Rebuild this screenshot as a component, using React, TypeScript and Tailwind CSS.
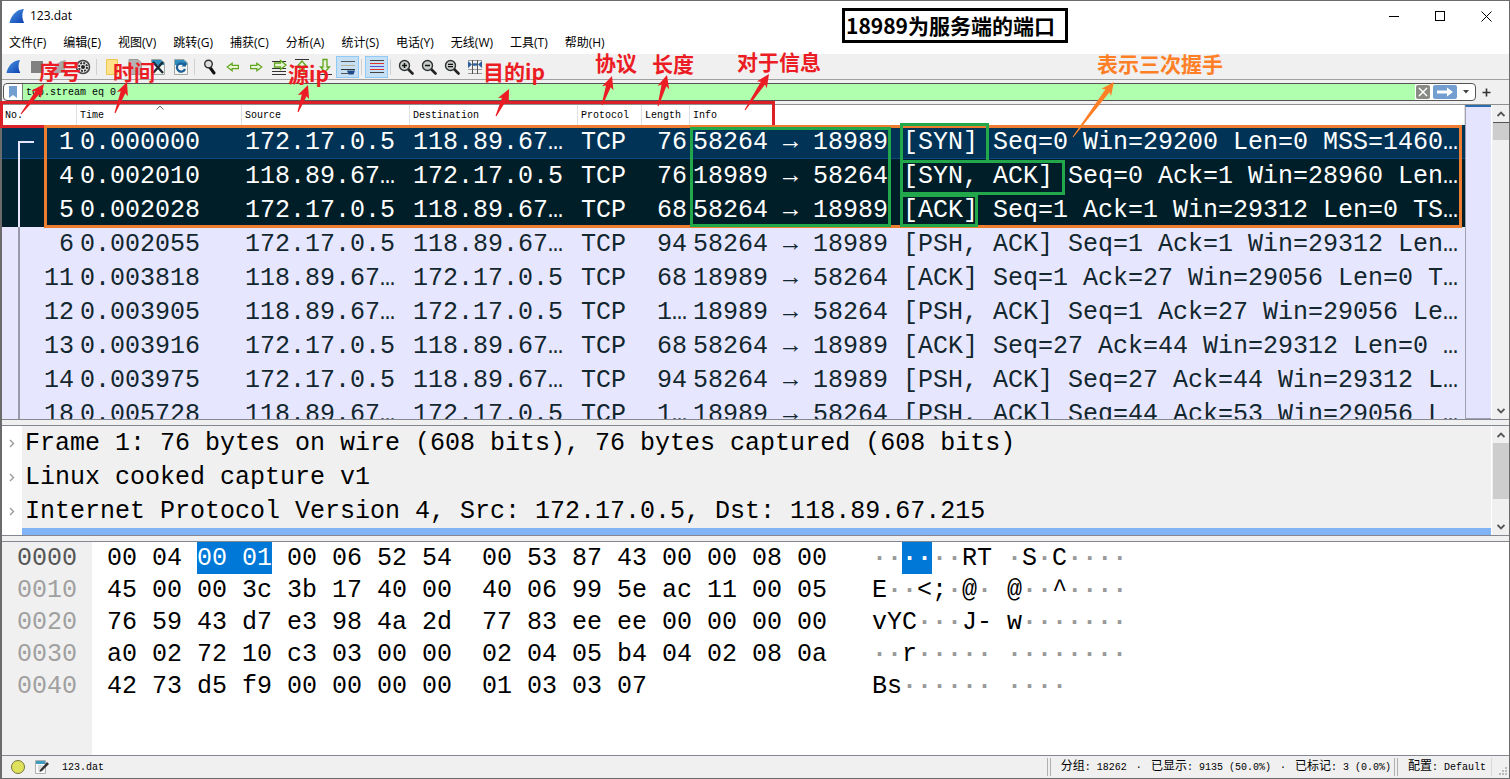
import type { ReactNode } from "react";
import clsx from "clsx";

type Packet = {
  no: number;
  time: string;
  source: string;
  destination: string;
  length: string;
  info: string;
};

const A = "172.17.0.5";
const B = "118.89.67…";

const packets: Packet[] = [
  { no: 1, time: "0.000000", source: A, destination: B, length: "76", info: "58264 → 18989 [SYN] Seq=0 Win=29200 Len=0 MSS=1460…" },
  { no: 4, time: "0.002010", source: B, destination: A, length: "76", info: "18989 → 58264 [SYN, ACK] Seq=0 Ack=1 Win=28960 Len…" },
  { no: 5, time: "0.002028", source: A, destination: B, length: "68", info: "58264 → 18989 [ACK] Seq=1 Ack=1 Win=29312 Len=0 TS…" },
  { no: 6, time: "0.002055", source: A, destination: B, length: "94", info: "58264 → 18989 [PSH, ACK] Seq=1 Ack=1 Win=29312 Len…" },
  { no: 11, time: "0.003818", source: B, destination: A, length: "68", info: "18989 → 58264 [ACK] Seq=1 Ack=27 Win=29056 Len=0 T…" },
  { no: 12, time: "0.003905", source: B, destination: A, length: "1…", info: "18989 → 58264 [PSH, ACK] Seq=1 Ack=27 Win=29056 Le…" },
  { no: 13, time: "0.003916", source: A, destination: B, length: "68", info: "58264 → 18989 [ACK] Seq=27 Ack=44 Win=29312 Len=0 …" },
  { no: 14, time: "0.003975", source: A, destination: B, length: "94", info: "58264 → 18989 [PSH, ACK] Seq=27 Ack=44 Win=29312 L…" },
  { no: 18, time: "0.005728", source: B, destination: A, length: "1…", info: "18989 → 58264 [PSH, ACK] Seq=44 Ack=53 Win=29056 L…" },
];

const columns = ["No.", "Time", "Source", "Destination", "Protocol", "Length", "Info"];

const menus = [
  "文件(F)",
  "编辑(E)",
  "视图(V)",
  "跳转(G)",
  "捕获(C)",
  "分析(A)",
  "统计(S)",
  "电话(Y)",
  "无线(W)",
  "工具(T)",
  "帮助(H)",
];

const details = [
  "Frame 1: 76 bytes on wire (608 bits), 76 bytes captured (608 bits)",
  "Linux cooked capture v1",
  "Internet Protocol Version 4, Src: 172.17.0.5, Dst: 118.89.67.215",
];

const hexRows = [
  { offset: "0010", bytes: "45 00 00 3c 3b 17 40 00  40 06 99 5e ac 11 00 05", ascii: "E··<;·@· @··^····" },
  { offset: "0020", bytes: "76 59 43 d7 e3 98 4a 2d  77 83 ee ee 00 00 00 00", ascii: "vYC···J- w·······" },
  { offset: "0030", bytes: "a0 02 72 10 c3 03 00 00  02 04 05 b4 04 02 08 0a", ascii: "··r····· ········" },
  { offset: "0040", bytes: "42 73 d5 f9 00 00 00 00  01 03 03 07", ascii: "Bs······ ····" },
];

const mono = "font-['Liberation_Mono','Noto_Sans_CJK_SC',monospace]";
const smallMono = "font-['Liberation_Mono','Noto_Sans_CJK_SC',monospace] text-[10px]";

function Fin({ size }: { size: number }) {
  return (
    <svg width={size} height={size} viewBox="0 0 16 16">
      <defs>
        <linearGradient id="fin" x1="0" y1="0" x2="1" y2="1">
          <stop offset="0" stopColor="#4c9be8" />
          <stop offset="1" stopColor="#0c3fae" />
        </linearGradient>
      </defs>
      <path d="M0.500 15C2 7.500 7 1.500 15 1C12.800 5 12.800 10.500 15.200 15Z" fill="url(#fin)" />
    </svg>
  );
}

function Sheet({ children }: { children?: ReactNode }) {
  return (
    <svg width="16" height="18" viewBox="0 0 16 18">
      <path d="M1.500 1.500H11L14.500 5V16.500H1.500Z" fill="#f4f6f4" stroke="#a0a8a0" />
      <path d="M2 2H11L14 5V7H2Z" fill="#2f8fc0" />
      {children}
    </svg>
  );
}

function Lens({ children }: { children?: ReactNode }) {
  return (
    <svg width="16" height="16" viewBox="0 0 16 16">
      <path d="M10 10L14.500 14.500" stroke="#222" strokeWidth="2.600" strokeLinecap="round" />
      <circle cx="6.500" cy="6.500" r="5" fill="#c9cdc9" stroke="#2e3436" strokeWidth="1.400" />
      {children}
    </svg>
  );
}

function GreenArrow({ flip }: { flip?: boolean }) {
  return (
    <svg width="14" height="10" viewBox="0 0 16 12">
      <path
        d={flip ? "M15 6L9 1.500V4H1.500V8H9V10.500Z" : "M1 6L7 1.500V4H14.500V8H7V10.500Z"}
        fill="#e8f5d8"
        stroke="#5fa51e"
        strokeWidth="1.400"
      />
    </svg>
  );
}

function Tool({ label, active, children }: { label: string; active?: boolean; children: ReactNode }) {
  return (
    <button
      type="button"
      aria-label={label}
      className={clsx(
        "flex h-[22px] w-[23px] shrink-0 items-center justify-center",
        active && "border border-[#90c8f6] bg-[#c5e0f5]",
      )}
    >
      {children}
    </button>
  );
}

function Divider() {
  return <span className="mx-[2px] h-4 w-[2px] border-l border-[#d0d0d0]" />;
}

function Toolbar() {
  return (
    <div className="flex h-[26px] shrink-0 items-center border-b border-[#a0a0a0] bg-[#f0f0f0]">
      <Tool label="Start capture"><Fin size={15} /></Tool>
      <Tool label="Stop capture">
        <svg width="14" height="14"><rect x="1" y="1" width="12" height="12" fill="#808080" /></svg>
      </Tool>
      <Tool label="Restart capture">
        <svg width="15" height="15" viewBox="0 0 16 16">
          <path d="M0.500 15C2 7.500 7 1.500 15 1C12.800 5 12.800 10.500 15.200 15Z" fill="#a8a8a8" />
        </svg>
      </Tool>
      <Tool label="Capture options">
        <svg width="16" height="16" viewBox="0 0 16 16">
          <circle cx="8" cy="8" r="6.500" fill="#eee" stroke="#444" strokeWidth="1.600" />
          <circle cx="8" cy="8" r="4" fill="none" stroke="#333" strokeWidth="2" strokeDasharray="2 1.100" />
          <circle cx="8" cy="8" r="2" fill="#222" />
        </svg>
      </Tool>
      <Divider />
      <Tool label="Open file">
        <svg width="16" height="18" viewBox="0 0 16 18">
          <path d="M2.500 1.500H13.500V16.500H2.500Z" fill="#ffe28a" stroke="#eac84f" />
        </svg>
      </Tool>
      <Tool label="Save file">
        <svg width="16" height="18" viewBox="0 0 16 18">
          <path d="M2 1.500H11L14.500 5V16.500H2Z" fill="#b4b4b4" stroke="#999" />
        </svg>
      </Tool>
      <Tool label="Close file">
        <Sheet>
          <path d="M3 4L13 15M13 4L3 15" stroke="#1d2b36" strokeWidth="2.400" />
        </Sheet>
      </Tool>
      <Tool label="Reload file">
        <Sheet>
          <path d="M11.500 7A4.200 4.200 0 1 0 12 11" fill="none" stroke="#1f5f95" strokeWidth="2.200" />
          <path d="M13 3.500V8.500H8.500Z" fill="#1f5f95" />
        </Sheet>
      </Tool>
      <Divider />
      <Tool label="Find packet">
        <svg width="14" height="16" viewBox="0 0 14 16">
          <path d="M7 8.500L11 14" stroke="#111" strokeWidth="3" strokeLinecap="round" />
          <circle cx="5.500" cy="5" r="3.800" fill="#ddd" stroke="#333" strokeWidth="1.400" />
        </svg>
      </Tool>
      <Tool label="Previous packet"><GreenArrow /></Tool>
      <Tool label="Next packet"><GreenArrow flip /></Tool>
      <Tool label="Go to packet">
        <svg width="16" height="16" viewBox="0 0 16 16">
          <path d="M1 2.500H15M1 9.500H15M1 12.500H15M1 15.500H15" stroke="#333" />
          <path d="M15 6L9.500 1.500V4H3.500V8H9.500V10.500Z" fill="#e8f5d8" stroke="#5fa51e" strokeWidth="1.300" />
        </svg>
      </Tool>
      <Tool label="First packet">
        <svg width="16" height="18" viewBox="0 0 16 18">
          <path d="M1 1.500H15" stroke="#333" />
          <path d="M8 3L3.500 8H6V16H10V8H12.500Z" fill="#e8f5d8" stroke="#5fa51e" strokeWidth="1.300" />
        </svg>
      </Tool>
      <Tool label="Last packet">
        <svg width="16" height="18" viewBox="0 0 16 18">
          <path d="M1 16.500H15" stroke="#333" />
          <path d="M8 14L3.500 9H6V1.500H10V9H12.500Z" fill="#e8f5d8" stroke="#5fa51e" strokeWidth="1.300" />
        </svg>
      </Tool>
      <Tool label="Auto scroll" active>
        <svg width="16" height="18" viewBox="0 0 16 18">
          <path d="M1 3.500H15M1 15.500H8" stroke="#555" />
          <path d="M1 7.500H15" stroke="#b8b090" />
          <path d="M1 11.500H15" stroke="#333" />
          <path d="M7 12.500H15L13.500 16.500H8.500Z" fill="#204a87" />
        </svg>
      </Tool>
      <Divider />
      <Tool label="Colorize" active>
        <svg width="16" height="16" viewBox="0 0 16 16">
          <path d="M1 1.500H15M1 13.500H15" stroke="#444" />
          <path d="M1 4.500H15" stroke="#e03030" />
          <path d="M1 7.500H15" stroke="#5a4fcf" />
          <path d="M1 10.500H15" stroke="#e03030" />
        </svg>
      </Tool>
      <Divider />
      <Tool label="Zoom in">
        <Lens><path d="M4 6.500H9M6.500 4V9" stroke="#111" strokeWidth="1.500" /></Lens>
      </Tool>
      <Tool label="Zoom out">
        <Lens><path d="M4 6.500H9" stroke="#111" strokeWidth="1.500" /></Lens>
      </Tool>
      <Tool label="Normal size">
        <Lens><path d="M4 5.300H9M4 7.700H9" stroke="#111" strokeWidth="1.300" /></Lens>
      </Tool>
      <Tool label="Resize columns">
        <svg width="16" height="16" viewBox="0 0 16 16">
          <path d="M1 1.500H15M1 10.500H15M1 14.500H15" stroke="#999" />
          <path d="M5.500 1V15M10.500 1V15" stroke="#555" />
          <path d="M1 2L5 5.500L1 9ZM15 2L11 5.500L15 9Z" fill="#2c5d9e" />
          <path d="M6 5.500H10" stroke="#2c5d9e" strokeWidth="2.400" />
        </svg>
      </Tool>
    </div>
  );
}

function FilterBar() {
  return (
    <div className="flex h-[25px] shrink-0 items-center border-b border-[#909090] bg-[#f0f0f0] pr-[18px] pl-px">
      <div className="flex h-[18px] flex-1 items-center overflow-hidden rounded-sm border border-[#555] bg-white">
        <button type="button" aria-label="Bookmark" className="flex w-[18px] justify-center">
          <svg width="8" height="12"><path d="M0 0H8V12L4 9L0 12Z" fill="#729fcf" /></svg>
        </button>
        <input
          aria-label="Display filter"
          defaultValue="tcp.stream eq 0"
          className={`h-4 min-w-0 flex-1 border-l border-[#777] bg-[#afffaf] px-[3px] text-black outline-none ${smallMono}`}
        />
        <button type="button" aria-label="Clear filter" className="ml-px h-[14px] w-[14px] rounded-[2px] bg-[#888a85]">
          <svg width="14" height="14"><path d="M3 3L11 11M11 3L3 11" stroke="#fff" strokeWidth="1.500" /></svg>
        </button>
        <button type="button" aria-label="Apply filter" className="ml-[3px] h-[14px] w-6 rounded-[2px] bg-[#729fcf]">
          <svg width="24" height="14"><path d="M4 5.500H14V2.500L20 7L14 11.500V8.500H4Z" fill="#fff" /></svg>
        </button>
        <button type="button" aria-label="Recent filters" className="flex w-[18px] justify-center">
          <svg width="6" height="4"><path d="M0 0H6L3 3.500Z" fill="#444" /></svg>
        </button>
      </div>
      <button type="button" aria-label="Add filter button" className="ml-1.5">
        <svg width="9" height="9"><path d="M0.500 4.500H8.500M4.500 0.500V8.500" stroke="#333" strokeWidth="1.600" /></svg>
      </button>
    </div>
  );
}

function ScrollBar({ thumb }: { thumb: ReactNode }) {
  return (
    <div className="flex w-[18px] shrink-0 flex-col items-center border-l border-white bg-[#f0f0f0]">
      <svg width="8" height="17" viewBox="0 0 8 17">
        <path d="M0.500 11L4 7.500L7.500 11" fill="none" stroke="#555" strokeWidth="1.800" />
      </svg>
      {thumb}
      <svg width="8" height="17" viewBox="0 0 8 17" className="mt-auto">
        <path d="M0.500 7L4 10.500L7.500 7" fill="none" stroke="#555" strokeWidth="1.800" />
      </svg>
    </div>
  );
}

function PacketList() {
  return (
    <div className="flex h-[315px] shrink-0 overflow-hidden border-b border-[#828790]">
      <div className="min-w-0 flex-1 overflow-hidden bg-[#e7e6ff]">
        <table className="w-full table-fixed border-collapse">
          <colgroup>
            <col className="w-[75px]" />
            <col className="w-[165px]" />
            <col className="w-[168px]" />
            <col className="w-[168px]" />
            <col className="w-[64px]" />
            <col className="w-[48px]" />
            <col />
          </colgroup>
          <thead>
            <tr className="h-5 bg-white">
              {columns.map((name) => (
                <th
                  key={name}
                  scope="col"
                  className={`relative p-0 pl-[3px] text-left font-normal whitespace-nowrap text-black shadow-[inset_-1px_0_0_#e0e0e0] ${smallMono}`}
                >
                  {name}
                  {name === "Time" ? (
                    <svg width="8" height="5" className="absolute top-0 left-1/2 -translate-x-1/2">
                      <path d="M0.500 4.500L4 1L7.500 4.500" fill="none" stroke="#666" />
                    </svg>
                  ) : null}
                </th>
              ))}
            </tr>
          </thead>
          <tbody className={`text-[25px] leading-8 whitespace-pre ${mono}`}>
            {packets.map((packet, i) => (
              <tr
                key={packet.no}
                className={clsx(
                  "h-[34px]",
                  i === 0 && "bg-[#003356] text-white shadow-[inset_0_-1px_0_#0b4a80]",
                  (i === 1 || i === 2) && "bg-[#001e28] text-white",
                  i > 2 && "text-[#12272e]",
                )}
              >
                <td className="p-0 pr-[3px]">
                  <div className="flex h-[34px] items-end justify-between pl-4">
                    <span
                      className={clsx(
                        "w-4 border-l-2",
                        i === 0 ? "h-[18px] border-t-2" : "h-[34px]",
                        i < 3 ? "border-[#e7e6ff]" : "border-[#9a9aaa]",
                      )}
                    />
                    <span>{packet.no}</span>
                  </div>
                </td>
                <td className="p-0 pt-0.5 pl-[3px]">{packet.time}</td>
                <td className="p-0 pt-0.5 pl-[3px]">{packet.source}</td>
                <td className="p-0 pt-0.5 pl-[3px]">{packet.destination}</td>
                <td className="p-0 pt-0.5 pl-[3px]">TCP</td>
                <td className="p-0 pt-0.5 pr-[3px] text-right">{packet.length}</td>
                <td className="overflow-hidden p-0 pt-0.5 pl-[3px]">{packet.info}</td>
              </tr>
            ))}
          </tbody>
        </table>
      </div>
      <div className="w-[26px] shrink-0 border-t-2 border-b border-l border-t-[#2a6db0] border-b-[#a0a0b0] border-l-[#a0a0b0] bg-[#e4e4ff]" />
      <ScrollBar thumb={<span className="h-[18px] w-4 border-t border-[#555] bg-[#cdcdcd]" />} />
    </div>
  );
}

function DetailPane() {
  return (
    <div className="flex h-[111px] shrink-0 border-y border-[#828790] bg-[#f0f0f0]">
      <div className="flex min-w-0 flex-1 flex-col">
        <ul className={`text-[25px] leading-8 whitespace-pre text-black ${mono}`}>
          {details.map((line) => (
            <li key={line} className="flex">
              <button type="button" aria-label="Expand" className="flex w-5 items-center justify-center bg-white">
                <svg width="6" height="9"><path d="M1 1L4.500 4.500L1 8" fill="none" stroke="#9a9a9a" strokeWidth="1.400" /></svg>
              </button>
              <span className="pt-0.5 pl-[3px]">{line}</span>
            </li>
          ))}
        </ul>
        <div className="flex flex-1 bg-[#80b4f4]">
          <span className="w-5 bg-white" />
        </div>
      </div>
      <ScrollBar thumb={<span className="h-14 w-4 bg-[#cdcdcd]" />} />
    </div>
  );
}

// Non-printable bytes are shown as grey dots
function Ascii({ text }: { text: string }) {
  return (
    <span>
      {text.split(/(·+)/).map((part, i) =>
        part.startsWith("·") ? (
          <span key={i} className="font-bold text-[#999]">{part}</span>
        ) : (
          part
        ),
      )}
    </span>
  );
}

function HexLine({ children, className }: { children: ReactNode; className?: string }) {
  return <div className={clsx("flex h-8 pt-0.5", className)}>{children}</div>;
}

function Selected({ children }: { children: ReactNode }) {
  return <span className="-mt-0.5 bg-[#0078d7] pt-0.5 text-white">{children}</span>;
}

function HexPane() {
  return (
    <div className={`flex min-h-0 flex-1 overflow-hidden border-t border-[#828790] bg-white text-[25px] leading-[30px] whitespace-pre text-black ${mono}`}>
      <div className="w-[90px] shrink-0 bg-[#f0f0f0] pl-[15px] text-[#a0a0a0]">
        <HexLine className="text-[#555]">0000</HexLine>
        {hexRows.map((row) => (
          <HexLine key={row.offset}>{row.offset}</HexLine>
        ))}
      </div>
      <div className="w-[780px] shrink-0 pl-[15px]">
        <HexLine>
          {"00 04 "}
          <Selected>00 01</Selected>
          {" 00 06 52 54  00 53 87 43 00 00 08 00"}
        </HexLine>
        {hexRows.map((row) => (
          <HexLine key={row.offset}>{row.bytes}</HexLine>
        ))}
      </div>
      <div>
        <HexLine>
          <Ascii text="··" />
          <Selected><b>··</b></Selected>
          <Ascii text="··RT ·S·C····" />
        </HexLine>
        {hexRows.map((row) => (
          <HexLine key={row.offset}>
            <Ascii text={row.ascii} />
          </HexLine>
        ))}
      </div>
    </div>
  );
}

function Han({ children }: { children: ReactNode }) {
  return <span className="text-xs leading-4">{children}</span>;
}

function StatusBar() {
  return (
    <footer className={`flex h-[23px] shrink-0 items-center border-t border-[#828790] bg-[#f0f0f0] whitespace-pre text-black ${smallMono}`}>
      <svg width="16" height="16" viewBox="0 0 16 16" className="ml-2">
        <circle cx="8" cy="8" r="6.500" fill="#dfe05c" stroke="#77783a" />
      </svg>
      <svg width="16" height="16" viewBox="0 0 16 16" className="ml-2">
        <path d="M1.500 1.500H11.500V14.500H1.500Z" fill="#fafafa" stroke="#b0b0b0" />
        <path d="M2 2H11V5H2Z" fill="#3d9cc0" />
        <path d="M4 7H9M4 9H8M4 11H8" stroke="#bbb" />
        <path d="M6 11L13 3L15 5L8 12L5.500 13Z" fill="#333" />
      </svg>
      <span className="ml-3">123.dat</span>
      <span className="ml-auto h-[18px] w-1 border-x border-[#b0b0b0]" />
      <span className="ml-2.5">
        <Han>分组</Han>: 18262 <span className="inline-block w-3 text-center">·</span> <Han>已显示</Han>: 9135 (50.0%) <span className="inline-block w-3 text-center">·</span> <Han>已标记</Han>: 3 (0.0%)
      </span>
      <span className="ml-[3px] h-[18px] w-1 border-x border-[#b0b0b0]" />
      <span className="ml-2.5">
        <Han>配置</Han>: Default
      </span>
      <span className="ml-[5px] h-[18px] w-px bg-[#d8d8d8]" />
      <svg width="10" height="10" className="mt-2 mr-px ml-1.5" fill="#bbb">
        <path d="M7 1h2v2h-2zM4 4h2v2h-2zM7 4h2v2h-2zM1 7h2v2h-2zM4 7h2v2h-2zM7 7h2v2h-2z" />
      </svg>
    </footer>
  );
}

type Point = [number, number];

const arrows: { from: Point; to: Point; color: string }[] = [
  { from: [21, 114], to: [44, 84], color: "#ec1c24" },
  { from: [115, 113], to: [127, 82], color: "#ec1c24" },
  { from: [298, 112], to: [308, 85], color: "#ec1c24" },
  { from: [496, 116], to: [509, 89], color: "#ec1c24" },
  { from: [602, 105], to: [612, 76], color: "#ec1c24" },
  { from: [658, 106], to: [667, 75], color: "#ec1c24" },
  { from: [745, 110], to: [769, 74], color: "#ec1c24" },
  { from: [1073, 137], to: [1114, 82], color: "#ff7f27" },
];

function arrowPath([x1, y1]: Point, [x2, y2]: Point) {
  const len = Math.hypot(x2 - x1, y2 - y1);
  const ux = (x2 - x1) / len;
  const uy = (y2 - y1) / len;
  const at = (back: number, side: number) => `${x2 - ux * back - uy * side},${y2 - uy * back + ux * side}`;
  return [at(0, 0), at(13, 6), at(11, 2.5), at(len, 0.5), at(len, -0.5), at(11, -2.5), at(13, -6)].join(" ");
}

const notes = [
  { text: "序号", place: "top-[60px] left-[39px] text-[#ec1c24]" },
  { text: "时间", place: "top-[61px] left-[113px] text-[#ec1c24]" },
  { text: "源ip", place: "top-[63px] left-[288px] text-[#ec1c24]" },
  { text: "目的ip", place: "top-[61px] left-[483px] text-[#ec1c24]" },
  { text: "协议", place: "top-[52px] left-[595px] text-[#ec1c24]" },
  { text: "长度", place: "top-[53px] left-[652px] text-[#ec1c24]" },
  { text: "对于信息", place: "top-[51px] left-[737px] text-[#ec1c24]" },
  { text: "表示三次握手", place: "top-[53px] left-[1097px] text-[#ff7f27]" },
];

function Annotations() {
  return (
    <div className="pointer-events-none absolute inset-0 overflow-hidden font-['Noto_Sans_CJK_SC',sans-serif] text-[21px] leading-[21px] font-bold whitespace-nowrap">
      <svg className="absolute inset-0 h-full w-full" fill="none" strokeWidth="3">
        <rect x="1.500" y="102.500" width="772" height="24" stroke="#dc2028" />
        <rect x="45.500" y="126.500" width="1415" height="100" stroke="#ed7d31" />
        <g stroke="#22a74b">
          <rect x="691.500" y="128.500" width="198" height="97" />
          <rect x="901.500" y="124.500" width="86" height="37" />
          <rect x="901.500" y="161.500" width="162" height="32" />
          <rect x="901.500" y="195.500" width="75" height="30" />
        </g>
        {arrows.map((arrow) => (
          <polygon key={arrow.from[0]} points={arrowPath(arrow.from, arrow.to)} fill={arrow.color} stroke="none" />
        ))}
      </svg>
      {notes.map((note) => (
        <span key={note.text} className={clsx("absolute", note.place)}>
          {note.text}
        </span>
      ))}
      <span className="absolute top-2 left-[842px] flex h-[35px] w-[226px] items-center border-[3px] border-black pl-px text-black">
        18989为服务端的端口
      </span>
    </div>
  );
}

export default function App() {
  return (
    <div className="relative">
      <div className="flex h-screen min-h-[640px] flex-col border border-l-2 border-[#6b6b6b] bg-[#f0f0f0]">
        <header className="flex h-[30px] shrink-0 items-center bg-white pl-[7px] font-['Open_Sans',sans-serif] text-xs text-black">
          <Fin size={16} />
          <h1 className="ml-[5px]">123.dat</h1>
          <div className="ml-auto flex">
            <button type="button" aria-label="Minimize" className="flex w-[46px] justify-center">
              <svg width="11" height="11"><path d="M0 5.500H10" stroke="#000" /></svg>
            </button>
            <button type="button" aria-label="Maximize" className="flex w-[46px] justify-center">
              <svg width="11" height="11"><rect x="0.500" y="0.500" width="9" height="9" fill="none" stroke="#000" /></svg>
            </button>
            <button type="button" aria-label="Close" className="flex w-[46px] justify-center">
              <svg width="11" height="11"><path d="M0.500 0.500L10.500 10.500M10.500 0.500L0.500 10.500" stroke="#000" /></svg>
            </button>
          </div>
        </header>
        <nav className="flex h-[23px] shrink-0 items-center gap-[17px] bg-white pl-[7px] font-['Open_Sans','Noto_Sans_CJK_SC',sans-serif] text-xs text-black">
          {menus.map((menu) => (
            <button key={menu} type="button" className="whitespace-nowrap">
              {menu}
            </button>
          ))}
        </nav>
        <Toolbar />
        <FilterBar />
        <PacketList />
        <div className="h-[5px] shrink-0" />
        <DetailPane />
        <div className="h-[5px] shrink-0" />
        <HexPane />
        <StatusBar />
      </div>
      <Annotations />
    </div>
  );
}
